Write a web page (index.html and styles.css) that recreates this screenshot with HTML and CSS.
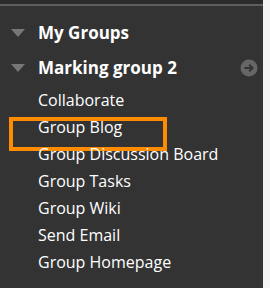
FILE: index.html
```html
<!DOCTYPE html>
<html lang="en">
<head>
    <meta charset="UTF-8">
    <meta name="viewport" content="width=device-width, initial-scale=1.0">
    <title>Course Menu</title>
    <link rel="stylesheet" href="styles.css">
</head>
<body>
    <div class="page">
        <div class="menu">
            <div class="topbar"></div>
            <div class="group-list">
                <div class="group-head">
                    <span class="twisty"></span>
                    <span class="head-title">My Groups</span>
                </div>
                <div class="group-head">
                    <span class="twisty"></span>
                    <span class="head-title">Marking group 2</span>
                    <svg class="go-icon" width="18" height="18" viewBox="0 0 18 18">
                        <circle cx="9" cy="9" r="8.5" fill="#666"/>
                        <path d="M4.5 9 H12.5 M9.2 5.6 L12.6 9 L9.2 12.4" fill="none" stroke="#333" stroke-width="2"/>
                    </svg>
                </div>
                <ul class="tools">
                    <li>Collaborate</li>
                    <li class="marked">Group Blog</li>
                    <li>Group Discussion Board</li>
                    <li>Group Tasks</li>
                    <li>Group Wiki</li>
                    <li>Send Email</li>
                    <li>Group Homepage</li>
                </ul>
            </div>
        </div>
        <div class="edge"></div>
    </div>
</body>
</html>
```

FILE: styles.css
```css
body {
    margin: 0;
    padding: 0;
    background-color: #333;
    font-family: "Open Sans", "Liberation Sans", sans-serif;
    color: #fff;
}
.page {
    display: flex;
    height: 288px;
    overflow: hidden;
}
.menu {
    flex: 1;
}
.edge {
    width: 7px;
    background-color: #f4f4f4;
}
.topbar {
    height: 4px;
    background-color: #2b2b2b;
    border-bottom: 2px solid #5e5e5e;
}
.group-list {
    position: relative;
    padding-top: 9px;
}
.group-head {
    display: flex;
    align-items: center;
    height: 35px;
    padding-right: 5px;
    font-size: 17px;
    font-weight: bold;
    line-height: 35px;
}
.twisty {
    width: 0;
    height: 0;
    margin-left: 11px;
    margin-right: 13px;
    border-left: 7px solid transparent;
    border-right: 7px solid transparent;
    border-top: 8px solid #777;
}
.go-icon {
    margin-left: auto;
}
.tools {
    list-style: none;
    margin: 2px 0 0;
    padding: 0;
}
.tools li {
    position: relative;
    padding-left: 38px;
    font-size: 16px;
    line-height: 27px;
    white-space: nowrap;
}
.marked::after {
    content: "";
    position: absolute;
    left: 9px;
    top: 3px;
    width: 150px;
    height: 26px;
    border: 4px solid #ff8c00;
}
```
